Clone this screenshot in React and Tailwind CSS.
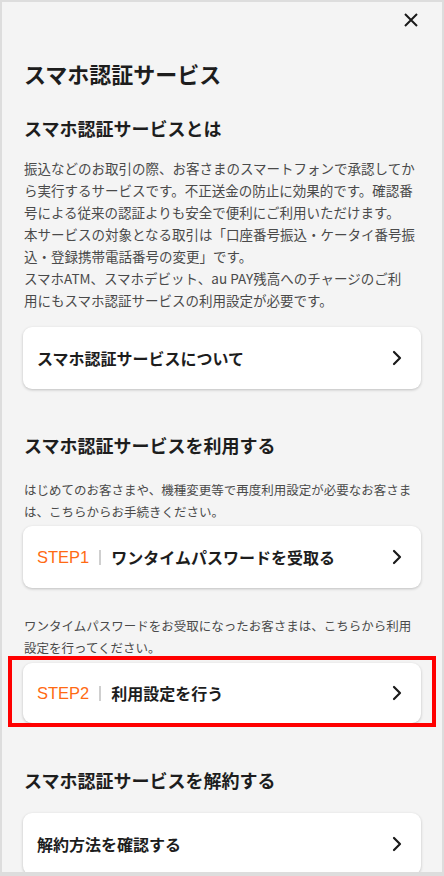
import React from "react";

const Chevron = () => (
  <svg width="10" height="16" viewBox="0 0 10 16" fill="none" className="shrink-0">
    <path d="M2 2l6 6-6 6" stroke="#1a1a1a" strokeWidth="2.2" strokeLinecap="round" strokeLinejoin="round" />
  </svg>
);

const Card = ({ step, label, className = "" }) => (
  <div
    className={`flex items-center justify-between h-[62px] pl-[14px] pr-[19px] bg-white rounded-[9px] shadow-[0_1px_3px_rgba(0,0,0,0.22)] ${className}`}
  >
    <div className="flex items-center text-[16px] leading-none">
      {step && (
        <>
          <span
            className="text-[#ff6a13] text-[16.5px]"
            style={{ fontFamily: '"Liberation Sans", Arial, sans-serif' }}
          >
            {step}
          </span>
          <span className="mx-[10px] w-[2px] h-[15px] bg-[#cfcfcf]" />
        </>
      )}
      <span className="font-bold text-[#1d1d1d]">{label}</span>
    </div>
    <Chevron />
  </div>
);

const App = () => {
  return (
    <div
      className="w-[444px] h-[876px] overflow-hidden bg-[#f4f4f4] border-2 border-b-4 border-[#dddddd] text-[#1d1d1d]"
      style={{ fontFamily: '"Noto Sans CJK JP", "Noto Sans", sans-serif' }}
    >
      <div className="flex justify-end pt-[11px] pr-[24px]">
        <svg width="14" height="14" viewBox="0 0 14 14" fill="none">
          <path d="M1 1l12 12M13 1L1 13" stroke="#1a1a1a" strokeWidth="2" />
        </svg>
      </div>

      <div className="px-[21px]">
        <h1 className="mt-[31px] pl-px text-[22px] leading-[30px] font-bold">スマホ認証サービス</h1>

        <h2 className="mt-[27px] pl-px text-[18px] leading-[26px] font-bold">スマホ認証サービスとは</h2>
        <p className="mt-[16px] pl-px text-[13.5px] leading-[22px] text-[#4a4a4a]">
          振込などのお取引の際、お客さまのスマートフォンで承認してから実行するサービスです。不正送金の防止に効果的です。確認番号による従来の認証よりも安全で便利にご利用いただけます。
          <br />
          本サービスの対象となる取引は「口座番号振込・ケータイ番号振込・登録携帯電話番号の変更」です。
          <br />
          スマホATM、スマホデビット、au PAY残高へのチャージのご利
          <br />
          用にもスマホ認証サービスの利用設定が必要です。
        </p>
        <Card label="スマホ認証サービスについて" className="mt-[16px]" />

        <h2 className="mt-[43px] pl-px text-[18px] leading-[26px] font-bold">スマホ認証サービスを利用する</h2>
        <p className="mt-[21px] pl-px text-[12.5px] leading-[22px] text-[#4a4a4a]">
          はじめてのお客さまや、機種変更等で再度利用設定が必要なお客さまは、こちらからお手続きください。
        </p>
        <Card step="STEP1" label="ワンタイムパスワードを受取る" className="mt-[3px]" />

        <p className="mt-[27px] pl-px text-[12.5px] leading-[22px] text-[#4a4a4a]">
          ワンタイムパスワードをお受取になったお客さまは、こちらから利用設定を行ってください。
        </p>
        <div className="relative mt-[4px]">
          <Card step="STEP2" label="利用設定を行う" className="!h-[60px]" />
          <div className="absolute -left-[15px] -right-[15px] -top-[7px] -bottom-[4px] border-4 border-[#ff0000] pointer-events-none" />
        </div>

        <h2 className="mt-[44px] pl-px text-[18px] leading-[26px] font-bold">スマホ認証サービスを解約する</h2>
        <Card label="解約方法を確認する" className="mt-[20px]" />
      </div>
    </div>
  );
};

export default App;
